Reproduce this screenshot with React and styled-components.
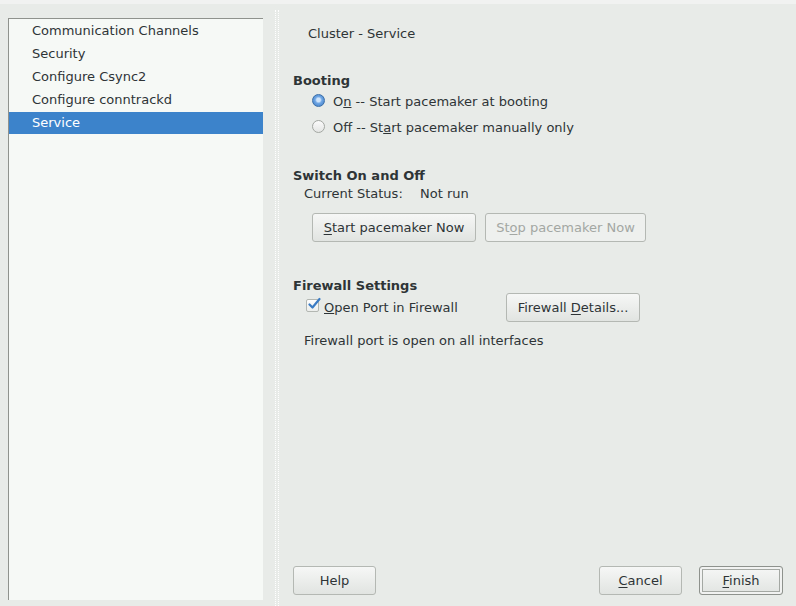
import React from 'react'
import styled, { createGlobalStyle } from 'styled-components'

const Global = createGlobalStyle`
  html, body { margin: 0; padding: 0; }
  body {
    background: #e8ebe8;
    font-family: "DejaVu Sans", "Liberation Sans", sans-serif;
    font-size: 13px;
    color: #2e3436;
  }
`

const Window = styled.div`
  width: 796px;
  height: 606px;
  display: flex;
  flex-direction: column;
  background: #e8ebe8;
  overflow: hidden;
`

const TopStrip = styled.div`
  height: 4px;
  background: #f1f2f1;
`

const Body = styled.div`
  flex: 1;
  display: flex;
  flex-direction: row;
`

const Sidebar = styled.div`
  width: 255px;
  padding: 14px 0 6px 8px;
  display: flex;
`

const StepList = styled.ul`
  flex: 1;
  margin: 0;
  padding: 1px 0 0;
  list-style: none;
  background: #f6f9f6;
  border-top: 1px solid #8f928d;
  border-left: 1px solid #8f928d;
`

const StepItem = styled.li`
  height: 23px;
  line-height: 22px;
  padding-left: 23px;
  background: ${p => (p.active ? '#3c83cb' : 'transparent')};
  color: ${p => (p.active ? '#ffffff' : '#2e3436')};
  box-sizing: border-box;
  border-bottom: ${p => (p.active ? '1px solid #f6f9f6' : 'none')};
`

const Splitter = styled.div`
  width: 19px;
  display: flex;
  padding-top: 6px;
`

const Dots = styled.div`
  width: 2px;
  margin-left: 12px;
  border-left: 1px dotted #ffffff;
  border-right: 1px dotted #ffffff;
`

const Content = styled.div`
  flex: 1;
  display: flex;
  flex-direction: column;
  padding: 0 13px 11px 11px;
  line-height: 16px;
`

const Title = styled.div`
  margin-top: 22px;
  padding-left: 15px;
`

const Heading = styled.div`
  font-weight: bold;
  margin-top: ${p => p.top}px;
`

const RadioRow = styled.label`
  display: flex;
  align-items: center;
  height: 26px;
  padding-left: 19px;
  gap: 8px;
`

const Radio = styled.span`
  width: 11px;
  height: 11px;
  border-radius: 50%;
  border: 1px solid ${p => (p.checked ? '#3a6ea8' : '#a3a7a2')};
  margin-top: -3px;
  background: ${p =>
    p.checked
      ? 'radial-gradient(circle at 50% 45%, #cfe4fb 0 22%, #6fa6e4 42%, #3a79c4 100%)'
      : 'linear-gradient(#fbfbfb, #e4e6e4)'};
`

const StatusRow = styled.div`
  display: flex;
  margin-top: 2px;
  padding-left: 11px;
`

const StatusLabel = styled.span`
  width: 116px;
`

const ButtonRow = styled.div`
  display: flex;
  gap: 9px;
  margin-top: ${p => p.top || 0}px;
  padding-left: ${p => p.indent || 0}px;
`

const Button = styled.button`
  font-family: inherit;
  font-size: 13px;
  height: 29px;
  width: ${p => p.w}px;
  padding: 0;
  border: 1px solid ${p => (p.isDefault ? '#8e928d' : '#b4b8b3')};
  border-radius: 3px;
  color: ${p => (p.disabled ? '#a3a7a3' : '#2e3436')};
  background: ${p =>
    p.disabled ? '#eef0ee' : 'linear-gradient(#f6f7f6, #e1e4e1)'};
  box-shadow: ${p =>
    p.isDefault ? 'inset 0 0 0 2px #f1f2f1, inset 0 0 0 3px #a4a8a3' : 'none'};
  u { text-decoration-thickness: 1px; text-underline-offset: 2px; }
`

const CheckRow = styled.div`
  display: flex;
  align-items: center;
  margin-top: -1px;
  padding-left: 13px;
`

const CheckLabel = styled.label`
  display: flex;
  align-items: center;
  width: 200px;
  gap: 5px;
`

const CheckBox = styled.span`
  position: relative;
  width: 11px;
  height: 11px;
  border: 1px solid #b3b7b2;
  border-radius: 2px;
  background: linear-gradient(#fdfdfd, #eceeec);
  margin-top: -4px;
  svg { position: absolute; left: 0; top: -3px; }
`

const Note = styled.div`
  margin-top: 11px;
  padding-left: 11px;
`

const Spacer = styled.div`
  flex: 1;
`

const Footer = styled.div`
  display: flex;
  align-items: center;
`

const FooterRight = styled.div`
  margin-left: auto;
  display: flex;
  gap: 17px;
`

const steps = [
  'Communication Channels',
  'Security',
  'Configure Csync2',
  'Configure conntrackd',
  'Service',
]

export default function App() {
  return (
    <Window>
      <Global />
      <TopStrip />
      <Body>
        <Sidebar>
          <StepList>
            {steps.map(s => (
              <StepItem key={s} active={s === 'Service'}>{s}</StepItem>
            ))}
          </StepList>
        </Sidebar>
        <Splitter><Dots /></Splitter>
        <Content>
          <Title>Cluster - Service</Title>

          <Heading top={31}>Booting</Heading>
          <RadioRow>
            <Radio checked />
            <span>O<u>n</u> -- Start pacemaker at booting</span>
          </RadioRow>
          <RadioRow>
            <Radio />
            <span>Off -- St<u>a</u>rt pacemaker manually only</span>
          </RadioRow>

          <Heading top={27}>Switch On and Off</Heading>
          <StatusRow>
            <StatusLabel>Current Status:</StatusLabel>
            <span>Not run</span>
          </StatusRow>
          <ButtonRow top={11} indent={19}>
            <Button w={164}><u>S</u>tart pacemaker Now</Button>
            <Button w={161} disabled>St<u>o</u>p pacemaker Now</Button>
          </ButtonRow>

          <Heading top={36}>Firewall Settings</Heading>
          <CheckRow>
            <CheckLabel>
              <CheckBox>
                <svg width="14" height="14" viewBox="0 0 14 14">
                  <path d="M2.5 7.5 L5.5 10.5 L12.5 2" fill="none" stroke="#3b7cc4" strokeWidth="2.2" strokeLinecap="round" strokeLinejoin="round" />
                </svg>
              </CheckBox>
              <span><u>O</u>pen Port in Firewall</span>
            </CheckLabel>
            <Button w={134}>Firewall <u>D</u>etails...</Button>
          </CheckRow>
          <Note>Firewall port is open on all interfaces</Note>

          <Spacer />
          <Footer>
            <Button w={83}>Help</Button>
            <FooterRight>
              <Button w={83}><u>C</u>ancel</Button>
              <Button w={84} isDefault><u>F</u>inish</Button>
            </FooterRight>
          </Footer>
        </Content>
      </Body>
    </Window>
  )
}
